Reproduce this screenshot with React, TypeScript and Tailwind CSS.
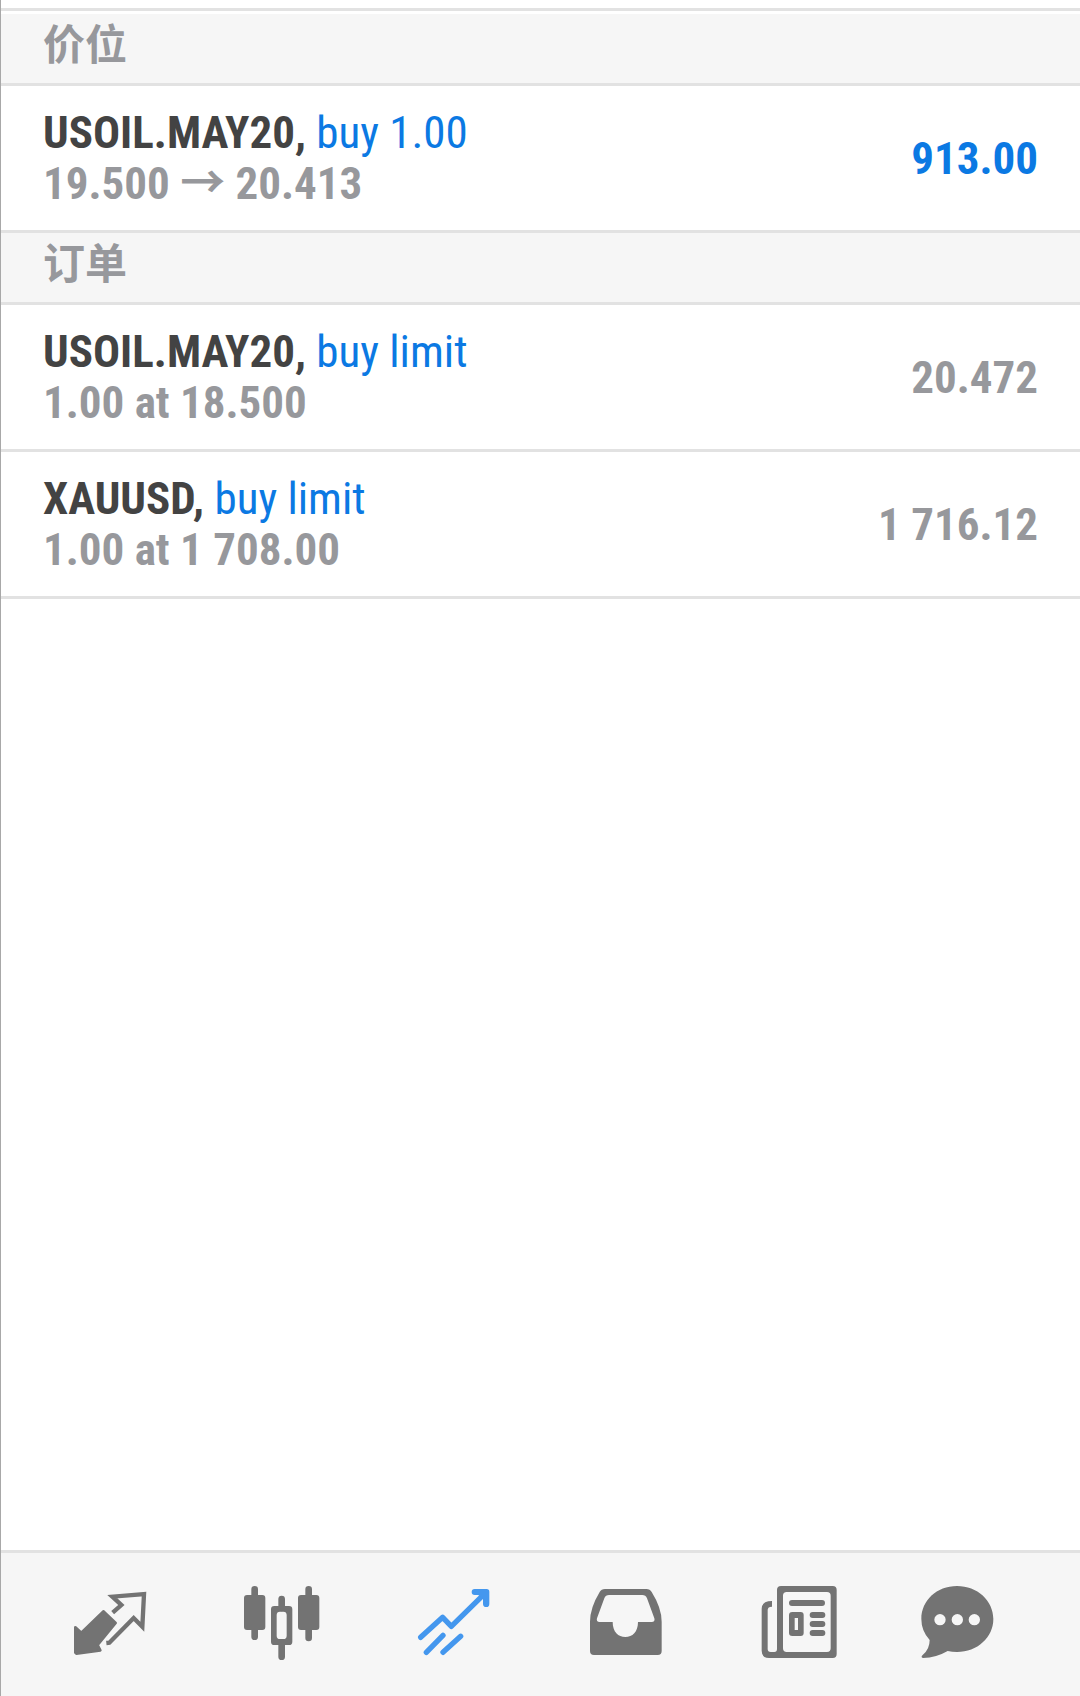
import React from 'react';

type Tone = 'blue' | 'gray';

interface Entry {
  id: number;
  symbol: string;
  action: string;
  detail: string;
  value: string;
  tone: Tone;
}

interface Tab {
  id: string;
  label: string;
  viewBox: string;
  icon: React.ReactNode;
}

const POSITIONS: Entry[] = [
  { id: 1, symbol: 'USOIL.MAY20,', action: 'buy 1.00', detail: '19.500 → 20.413', value: '913.00', tone: 'blue' },
];

const ORDERS: Entry[] = [
  { id: 2, symbol: 'USOIL.MAY20,', action: 'buy limit', detail: '1.00 at 18.500', value: '20.472', tone: 'gray' },
  { id: 3, symbol: 'XAUUSD,', action: 'buy limit', detail: '1.00 at 1 708.00', value: '1 716.12', tone: 'gray' },
];

// --- TAB ICONS ---

const TABS: Tab[] = [
  {
    id: 'quotes',
    label: 'Quotes',
    viewBox: '39 111 288 288',
    icon: (
      <>
        <path d="M160 214 L197 249 L143 315 L151 331 L79 341 L76 338 L76 262 L94 278 Z" fill="currentColor" stroke="currentColor" strokeWidth="8" strokeLinejoin="round" />
        <path d="M188 218 L214 195 L187 170 L282 162 L277 260 L251 234 L178 308 L169 309" fill="none" stroke="currentColor" strokeWidth="13" strokeLinejoin="miter" />
      </>
    ),
  },
  {
    id: 'charts',
    label: 'Charts',
    viewBox: '555 111 288 288',
    icon: (
      <>
        <path d="M614 148V290M776 148V294M695 177V204M695 310V350" fill="none" stroke="currentColor" strokeWidth="20" strokeLinecap="round" />
        <rect x="582" y="165" width="64" height="105" rx="9" fill="currentColor" />
        <rect x="744" y="165" width="64" height="105" rx="9" fill="currentColor" />
        <path fillRule="evenodd" d="M673 198H717Q727 198 727 208V305Q727 315 717 315H673Q663 315 663 305V208Q663 198 673 198ZM690 215Q680 215 680 225V287Q680 297 690 297H700Q710 297 710 287V225Q710 215 700 215Z" fill="currentColor" />
      </>
    ),
  },
  {
    id: 'trade',
    label: 'Trade',
    viewBox: '51 111 288 288',
    icon: (
      <>
        <path d="M92 292L158 232L184 259L284 161M109 337L159 286M159 337L212 289" fill="none" stroke="currentColor" strokeWidth="16" strokeLinecap="round" strokeLinejoin="round" />
        <path d="M254 147H290Q298 147 298 155V191Q298 201 289 201Q279 201 279 191V177L265 165H254Q245 165 245 156Q245 147 254 147Z" fill="currentColor" />
      </>
    ),
  },
  {
    id: 'history',
    label: 'History',
    viewBox: '567 111 288 288',
    icon: (
      <path fillRule="evenodd" d="M648 147H772Q783 147 788 156Q818 204 818 245V333Q818 345 806 345H615Q603 345 603 333V245Q603 204 632 156Q637 147 648 147ZM660 165Q650 165 646 175L624 235Q621 246 632 246H671C671 276 688 291 709 291C730 291 747 276 747 246H788Q799 246 796 235L774 175Q770 165 760 165Z" fill="currentColor" />
    ),
  },
  {
    id: 'news',
    label: 'News',
    viewBox: '63 111 288 288',
    icon: (
      <>
        <path fillRule="evenodd" d="M156 138H311Q323 138 323 150V342Q323 354 311 354H120Q98 354 98 332V207Q98 183 129 183V200Q116 200 116 210V327Q116 336 125 336H136Q144 336 144 327V150Q144 138 156 138ZM173 156Q162 156 162 167V325Q162 336 173 336H294Q305 336 305 325V167Q305 156 294 156Z" fill="currentColor" />
        <path fillRule="evenodd" d="M190 216H215Q224 216 224 225V279Q224 288 215 288H190Q180 288 180 279V225Q180 216 190 216ZM197 234V270H207V234Z" fill="currentColor" />
        <path d="M189 189H279M251 225H280M251 252H280M251 279H280" fill="none" stroke="currentColor" strokeWidth="18" strokeLinecap="round" />
      </>
    ),
  },
  {
    id: 'chat',
    label: 'Messages',
    viewBox: '579 111 288 288',
    icon: (
      <path fillRule="evenodd" d="M684 138C745 138 793 182 793 237C793 292 745 336 684 336Q669 336 656 333Q622 353 582 354Q574 352 581 345Q602 328 602 300Q577 273 577 237C577 182 623 138 684 138ZM633 222A17 17 0 1 0 633 256A17 17 0 1 0 633 222ZM685 222A17 17 0 1 0 685 256A17 17 0 1 0 685 222ZM736 222A17 17 0 1 0 736 256A17 17 0 1 0 736 222Z" fill="currentColor" />
    ),
  },
];

// --- SUB-COMPONENTS ---

const SectionHeader: React.FC<{ title: string }> = ({ title }) => (
  <h2 className="h-[72px] border-b-[3px] border-[#e2e2e2] bg-[#f6f6f6] px-[42px] pt-[6px] text-[42px] leading-[51px] font-bold text-[#97989c]">
    {title}
  </h2>
);

const EntryRow: React.FC<{ entry: Entry }> = ({ entry }) => (
  <li className="flex items-center justify-between border-b-[3px] border-[#e2e2e2] px-[42px] py-[21px] text-[45px] leading-[51px]">
    <div>
      <p>
        <span className="font-bold text-[#434343]">{entry.symbol}</span>{' '}
        <span className="text-[#0b79e3]">{entry.action}</span>
      </p>
      <p className="font-bold text-[#97989c]">{entry.detail}</p>
    </div>
    <span className={`font-bold ${entry.tone === 'blue' ? 'text-[#0b79e3]' : 'text-[#97989c]'}`}>{entry.value}</span>
  </li>
);

// --- MAIN PAGE COMPONENT ---

const App: React.FC = () => {
  const [activeTab, setActiveTab] = React.useState('trade');

  return (
    <div className="flex min-h-screen flex-col border-l border-[#a8a8a8] bg-white font-['Roboto_Condensed','Roboto','Noto_Sans_CJK_SC',sans-serif]">
      <main className="flex-1 pt-2">
        <section className="border-t-[3px] border-[#e2e2e2] pt-[3px]">
          <SectionHeader title="价位" />
          <ul>
            {POSITIONS.map((entry) => <EntryRow key={entry.id} entry={entry} />)}
          </ul>
        </section>
        <section>
          <SectionHeader title="订单" />
          <ul>
            {ORDERS.map((entry) => <EntryRow key={entry.id} entry={entry} />)}
          </ul>
        </section>
      </main>

      <nav className="sticky bottom-0 grid grid-cols-6 border-t-[3px] border-[#e2e2e2] bg-[#f6f6f6] px-6 pt-6 pb-[23px]">
        {TABS.map((tab) => (
          <button
            key={tab.id}
            type="button"
            aria-label={tab.label}
            onClick={() => setActiveTab(tab.id)}
            className={`flex justify-center ${tab.id === activeTab ? 'text-[#4497ee]' : 'text-[#737373]'}`}
          >
            <svg viewBox={tab.viewBox} className="size-24 overflow-visible" aria-hidden="true">{tab.icon}</svg>
          </button>
        ))}
      </nav>
    </div>
  );
};

export default App;
